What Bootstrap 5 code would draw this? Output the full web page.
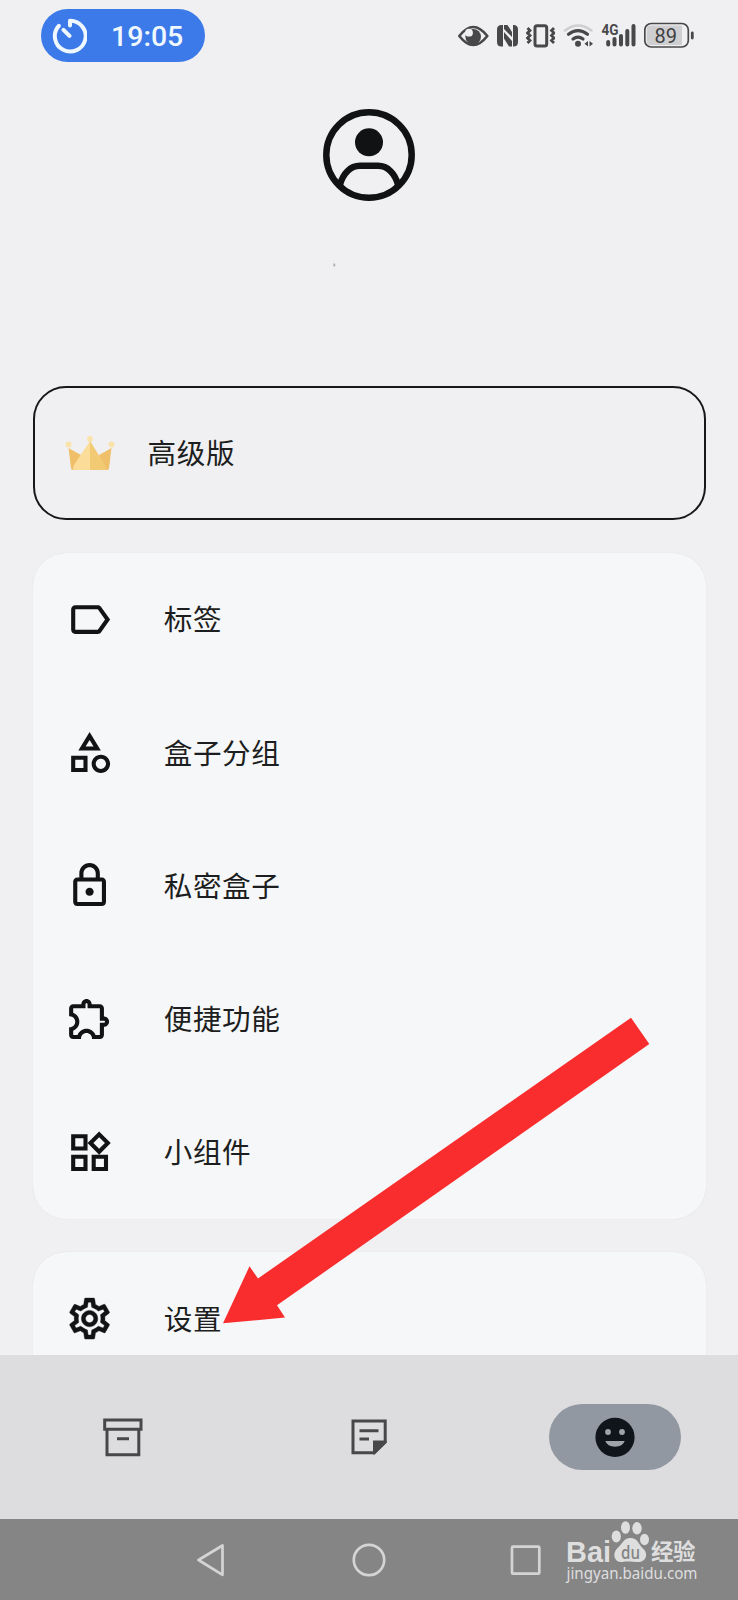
<!DOCTYPE html>
<html lang="zh-CN">
<head>
<meta charset="utf-8">
<meta name="viewport" content="width=device-width, initial-scale=1">
<title>我的</title>
<link href="https://cdn.jsdelivr.net/npm/bootstrap@5.3.0/dist/css/bootstrap.min.css" rel="stylesheet">
<style>
body{background:#f0f0f2;color:#1d1e20;font-family:"Noto Sans","Noto Sans CJK SC",sans-serif}
svg{display:block;flex:none}
.phone{width:738px;height:1600px}
.status{height:71px;padding:0 44px 0 41px}
.time-pill{width:164px;height:53px;background:#3c7ae9;color:#f0f8ff;padding-left:10px;font:500 28.5px/53px Roboto,sans-serif}
.time-pill span{margin:2px 0 0 24px}
.status-icons{color:#48484a;margin-top:-1px}
.profile{height:315px;padding-top:38px}
.scroll-area{height:969px;padding:0 32.5px}
.premium{height:134px;border:2px solid #17181a;border-radius:33px;padding-left:30px;font-size:28.6px;letter-spacing:.6px}
.premium span{margin-left:33px;margin-top:1px}
.panel{background:#f6f7f9;border-radius:33px;margin-top:33px;box-shadow:0 0 1px #d4d4d8}
.entry{height:133.3px;padding-left:32px;font-size:28.6px;letter-spacing:.6px;color:#1d1e20}
.entry span{margin-left:50px}
.entry svg{width:49.2px;height:49.2px;fill:#111315;margin-top:-1px}
.tabs{height:164px;background:#dddddf}
.tab-pill{width:132px;height:66px}
.tab-pill.on{background:#9298a1}
.sysbar{height:81px;background:#858585}
.arrow{left:0;top:0}
.logo{left:560px;top:1515px}
</style>
</head>
<body>
<main class="phone position-relative overflow-hidden d-flex flex-column">
  <header class="status d-flex align-items-center justify-content-between">
    <div class="time-pill rounded-pill d-flex align-items-center">
      <svg width="36" height="36" viewBox="51 17.5 36 36" fill="none" stroke="#f0f8ff" stroke-width="4" stroke-linecap="round" stroke-linejoin="round"><path d="M70 25V20.2A15.4 15.4 0 1 1 58.8 25.3M63.5 29.3L69.5 35.3"/></svg>
      <span>19:05</span>
    </div>
    <div class="status-icons d-flex gap-2">
      <svg width="31" height="30" viewBox="458 20 31 30"><path d="M459.300 36q14-18 28 0q-14 18-28 0z" fill="none" stroke="currentColor" stroke-width="2.600" stroke-linejoin="round"/><circle cx="473.200" cy="36.800" r="7.800" fill="currentColor"/><circle cx="469" cy="32.700" r="3.900" fill="#f0f0f2"/></svg>
      <svg width="21" height="30" viewBox="497 20 21 30"><path d="M501.500 25h1.500v21.500h-1.500q-4.500 0-4.500-4.500v-12.500q0-4.500 4.500-4.500zM513 25h.5q4.500 0 4.500 4.500v12.500q0 4.500-4.500 4.500h-.5zM504 25h3.500l4.500 7v5l-8-8zM504 32l8 9v5.500h-3l-5-8z" fill="currentColor"/></svg>
      <svg width="29" height="30" viewBox="526 20 29 30" fill="none" stroke="currentColor"><rect x="535" y="25.800" width="11.700" height="20.200" rx="2" stroke-width="3"/><path d="M527.500 28l2.500 2.500-2.500 2.500 2.500 2.500-2.500 2.500 2.500 2.500-2.500 2.500M554 28l-2.500 2.500 2.500 2.500-2.500 2.500 2.500 2.500-2.500 2.500 2.500 2.500" stroke-width="2.800"/></svg>
      <svg width="30" height="30" viewBox="563 20 30 30" fill="none" stroke="currentColor" stroke-width="3.200" stroke-linecap="round"><path d="M565 30.500q13-10 26.500 0" stroke="#cfcfd1" stroke-width="2.500"/><path d="M568.500 34.300q9.500-7.500 19 0M573 39q5-3.800 10 0"/><circle cx="578" cy="43.800" r="3" fill="currentColor" stroke="none"/><path d="M588 41v5.500l-3.500-2.700zM589.500 46.500v-5.500l3.500 2.700z" fill="currentColor" stroke="none"/></svg>
      <svg width="35" height="30" viewBox="601 20 35 30"><text x="601.500" y="35" font-family="Roboto" font-size="14.500" font-weight="700" textLength="17" lengthAdjust="spacingAndGlyphs" fill="currentColor">4G</text><path d="M608.200 42v2.500M614.500 39v5.500M621 36v8.500M627.300 31v13.500M633.500 26v18.500" stroke="currentColor" stroke-width="4" stroke-linecap="round"/></svg>
      <svg width="50" height="30" viewBox="644 20 50 30"><rect x="644.800" y="23.500" width="43.500" height="23.500" rx="6.500" fill="#f0f0f2" stroke="currentColor" stroke-width="1.700"/><path d="M651 25.500h31v19.500h-31q-4.300 0-4.300-4.300v-11q0-4.200 4.300-4.200z" fill="#cfcfd1"/><path d="M692.300 33v5" stroke="currentColor" stroke-width="2.800" stroke-linecap="round"/><text x="654.500" y="42.800" font-family="Roboto" font-size="21" textLength="22.500" lengthAdjust="spacingAndGlyphs" fill="#3f3f41">89</text></svg>
    </div>
  </header>

  <section class="profile d-flex justify-content-center">
    <svg width="92" height="160" viewBox="323 109 92 160"><g fill="none" stroke="#111214" stroke-width="6.500"><circle cx="369" cy="155" r="42.700"/><path d="M340 184.500C343 174 350 165.800 360 165.800h18c10 0 17 8.200 20 18.700"/></g><circle cx="369" cy="142.300" r="14" fill="#111214"/><ellipse cx="334.300" cy="265" rx="1" ry="1.800" fill="#aeaeb0"/></svg>
  </section>

  <section class="scroll-area overflow-hidden flex-shrink-0">
    <div class="premium d-flex align-items-center">
      <svg width="50" height="36" viewBox="65 434 50 36"><path d="M68.500 447L81 454l-5 15h-3q-1.800 0-2-1.800zM111.500 447L99 454l5 15h3q1.800 0 2-1.800z" fill="#efc069"/><path d="M90 440L74 464q-2 5 0 5h16z" fill="#fbdc98"/><path d="M90 440l15 24q2 5 0 5H90z" fill="#f3ca74"/><g fill="#fae3aa"><circle cx="90" cy="438" r="2.900"/><circle cx="68.500" cy="443.500" r="3"/><circle cx="111.500" cy="443.500" r="3"/></g></svg>
      <span>高级版</span>
    </div>
    <div class="panel">
      <div class="entry d-flex align-items-center"><svg viewBox="0 0 24 24"><path d="M17.630 5.840C17.270 5.330 16.670 5 16 5L5 5.010C3.900 5.010 3 5.900 3 7v10c0 1.100.9 1.990 2 1.990L16 19c.67 0 1.270-.33 1.630-.84L22 12l-4.370-6.160zM16 17H5V7h11l3.550 5L16 17z"/></svg><span>标签</span></div>
      <div class="entry d-flex align-items-center"><svg viewBox="0 0 24 24"><path d="M12 2l-5.500 9h11L12 2zm0 3.840L13.930 9h-3.870L12 5.840zM17.500 13c-2.490 0-4.500 2.010-4.500 4.500s2.010 4.500 4.500 4.500 4.500-2.010 4.500-4.500-2.010-4.500-4.500-4.500zm0 7c-1.380 0-2.500-1.120-2.500-2.500s1.120-2.500 2.500-2.500 2.500 1.120 2.500 2.500-1.120 2.500-2.500 2.500zM3 21.500h8v-8H3v8zm2-6h4v4H5v-4z"/></svg><span>盒子分组</span></div>
      <div class="entry d-flex align-items-center"><svg viewBox="0 0 24 24"><path d="M18 8h-1V6c0-2.760-2.240-5-5-5S7 3.240 7 6v2H6c-1.100 0-2 .9-2 2v10c0 1.100.9 2 2 2h12c1.100 0 2-.9 2-2V10c0-1.100-.9-2-2-2zM9 6c0-1.660 1.340-3 3-3s3 1.340 3 3v2H9V6zm9 14H6V10h12v10zm-6-3c1.100 0 2-.9 2-2s-.9-2-2-2-2 .9-2 2 .9 2 2 2z"/></svg><span>私密盒子</span></div>
      <div class="entry d-flex align-items-center"><svg viewBox="0 0 24 24"><path d="M10.500 4.500c.28 0 .5.220.5.500v2h6v6h2c.28 0 .5.220.5.500s-.22.500-.5.500h-2v6h-2.120c-.68-1.750-2.390-3-4.380-3s-3.700 1.250-4.380 3H4v-2.120c1.750-.68 3-2.390 3-4.380 0-1.990-1.240-3.700-2.990-4.380L4 7h6V5c0-.28.220-.5.500-.5m0-2C9.120 2.500 8 3.620 8 5H4c-1.100 0-1.990.9-1.990 2v3.800h.29c1.490 0 2.700 1.210 2.700 2.700s-1.210 2.700-2.700 2.700H2V20c0 1.100.9 2 2 2h3.800v-.3c0-1.490 1.210-2.700 2.700-2.700s2.700 1.210 2.700 2.700v.3H17c1.100 0 2-.9 2-2v-4c1.380 0 2.500-1.120 2.500-2.500S20.380 11 19 11V7c0-1.100-.9-2-2-2h-4c0-1.380-1.120-2.500-2.500-2.500z"/></svg><span>便捷功能</span></div>
      <div class="entry d-flex align-items-center"><svg viewBox="0 0 24 24"><path d="M16.660 4.520l2.830 2.830-2.830 2.830-2.830-2.830 2.830-2.830M9 5v4H5V5h4m10 10v4h-4v-4h4M9 15v4H5v-4h4m7.660-13.310L11 7.340 16.660 13l5.660-5.660-5.660-5.650zM11 3H3v8h8V3zm10 10h-8v8h8v-8zm-10 0H3v8h8v-8z"/></svg><span>小组件</span></div>
    </div>
    <div class="panel">
      <div class="entry d-flex align-items-center"><svg viewBox="0 0 24 24"><path stroke="#111315" stroke-width=".2" d="M19.430 12.980c.04-.32.07-.64.07-.98 0-.34-.03-.66-.07-.98l2.110-1.650c.19-.15.24-.42.12-.64l-2-3.460c-.09-.16-.26-.25-.44-.25-.06 0-.12.010-.17.030l-2.490 1c-.52-.4-1.080-.73-1.690-.98l-.38-2.650C14.460 2.180 14.250 2 14 2h-4c-.25 0-.46.180-.49.420l-.38 2.650c-.61.250-1.170.590-1.690.98l-2.490-1c-.06-.02-.12-.03-.18-.03-.17 0-.34.090-.43.250l-2 3.460c-.13.220-.07.490.12.640l2.110 1.650c-.04.320-.07.650-.07.980 0 .33.030.66.070.98l-2.110 1.650c-.19.150-.24.420-.12.640l2 3.460c.09.160.26.250.44.250.06 0 .12-.01.170-.03l2.490-1c.52.400 1.080.73 1.690.98l.38 2.650c.03.240.24.420.49.420h4c.25 0 .46-.18.490-.42l.38-2.650c.61-.25 1.170-.59 1.690-.98l2.490 1c.06.020.12.030.18.030.17 0 .34-.09.430-.25l2-3.460c.12-.22.07-.49-.12-.64l-2.110-1.650zm-1.980-1.710c.04.310.05.520.05.730 0 .21-.02.430-.05.730l-.14 1.130.89.700 1.080.84-.7 1.210-1.270-.51-1.040-.42-.9.680c-.43.320-.84.560-1.250.73l-1.060.43-.16 1.130-.2 1.350h-1.400l-.19-1.350-.16-1.130-1.060-.43c-.43-.18-.83-.41-1.230-.71l-.91-.7-1.060.43-1.270.51-.7-1.210 1.080-.84.890-.7-.14-1.130c-.03-.31-.05-.54-.05-.74s.02-.43.050-.73l.14-1.130-.89-.7-1.080-.84.700-1.210 1.270.51 1.040.42.900-.68c.43-.32.84-.56 1.250-.73l1.060-.43.160-1.130.2-1.350h1.390l.19 1.350.16 1.130 1.060.43c.43.180.83.410 1.230.71l.91.700 1.060-.43 1.270-.51.700 1.210-1.070.85-.89.700.14 1.130zM12 8c-2.210 0-4 1.790-4 4s1.790 4 4 4 4-1.790 4-4-1.790-4-4-4zm0 6c-1.100 0-2-.9-2-2s.9-2 2-2 2 .9 2 2-.9 2-2 2z"/></svg><span>设置</span></div>
    </div>
  </section>

  <nav class="tabs row g-0 align-items-center flex-shrink-0">
    <div class="col d-flex justify-content-center"><div class="tab-pill d-flex align-items-center justify-content-center">
      <svg width="40" height="40" viewBox="103 1417.500 40 40" fill="none" stroke="#48484b" stroke-width="3"><path d="M104.700 1420.500h36.300v9.300h-36.300zM107 1429.800h31.800v25.500H107zM117 1439.300h12"/></svg></div></div>
    <div class="col d-flex justify-content-center"><div class="tab-pill d-flex align-items-center justify-content-center">
      <svg width="38" height="40" viewBox="350 1417.500 38 40" fill="none" stroke="#48484b" stroke-width="3"><path d="M353 1421.500h32.200v21l-11 10.800H353zM359.500 1431.200h19M359.500 1439.400h9.500"/><path d="M373 1441h13.500v2l-12 12H373z" fill="#48484b" stroke="none"/></svg></div></div>
    <div class="col d-flex justify-content-center"><div class="tab-pill on rounded-pill d-flex align-items-center justify-content-center">
      <svg width="40" height="40" viewBox="0 0 40 40"><circle cx="20" cy="20.300" r="19.600" fill="#0f151a"/><g fill="#9fa4aa"><circle cx="13" cy="15" r="2.900"/><circle cx="27" cy="15" r="2.900"/><path d="M10.300 24h19.400a10 7.500 0 0 1-19.400 0z"/></g></svg></div></div>
  </nav>

  <footer class="sysbar flex-shrink-0 d-flex align-items-center justify-content-center">
    <svg width="346" height="36" viewBox="196 1541.500 346 36" fill="none" stroke="#d4d4d5" stroke-width="2.700" stroke-linejoin="round"><path d="M198.500 1559.500L222.500 1545v29.300z"/><circle cx="369" cy="1559.500" r="15.200"/><rect x="512" y="1546.200" width="27.300" height="27" rx="1"/></svg>
  </footer>

  <svg class="arrow position-absolute" width="738" height="1600" viewBox="0 0 738 1600"><path d="M223 1323.300L249.500 1266.300 258 1278.500 631 1017.700 649.300 1044 277 1305.300 285 1317.500z" fill="#f92d2d"/></svg>

  <svg class="logo position-absolute" width="142" height="75" viewBox="560 1515 142 75" fill="#dededf">
    <text x="566" y="1561.500" font-family="Liberation Sans" font-weight="700" font-size="30" textLength="45" lengthAdjust="spacingAndGlyphs">Bai</text>
    <ellipse cx="616.300" cy="1536.500" rx="4.600" ry="6"/><ellipse cx="625.500" cy="1527.500" rx="4.500" ry="6.300"/><ellipse cx="637" cy="1528.300" rx="4.700" ry="6.200"/><ellipse cx="644.500" cy="1539.500" rx="4.500" ry="5.800"/>
    <path d="M630.500 1538c7 0 8 6 12 10 7 6 3 14-4 14-5 0-11-1-16 0-8 1-11-8-5-14 5-4 6-10 13-10z"/>
    <text x="621" y="1558.500" font-family="Open Sans" font-weight="600" font-size="18" textLength="19" lengthAdjust="spacingAndGlyphs" fill="#858585">du</text>
    <text x="651" y="1559.500" font-family="Noto Sans CJK SC" font-weight="700" font-size="22.500" textLength="44.500">经验</text>
    <text x="566.500" y="1579" font-family="Noto Sans" font-size="16" textLength="131" lengthAdjust="spacingAndGlyphs">jingyan.baidu.com</text>
  </svg>
</main>
<script src="https://cdn.jsdelivr.net/npm/bootstrap@5.3.0/dist/js/bootstrap.bundle.min.js"></script>
</body>
</html>
